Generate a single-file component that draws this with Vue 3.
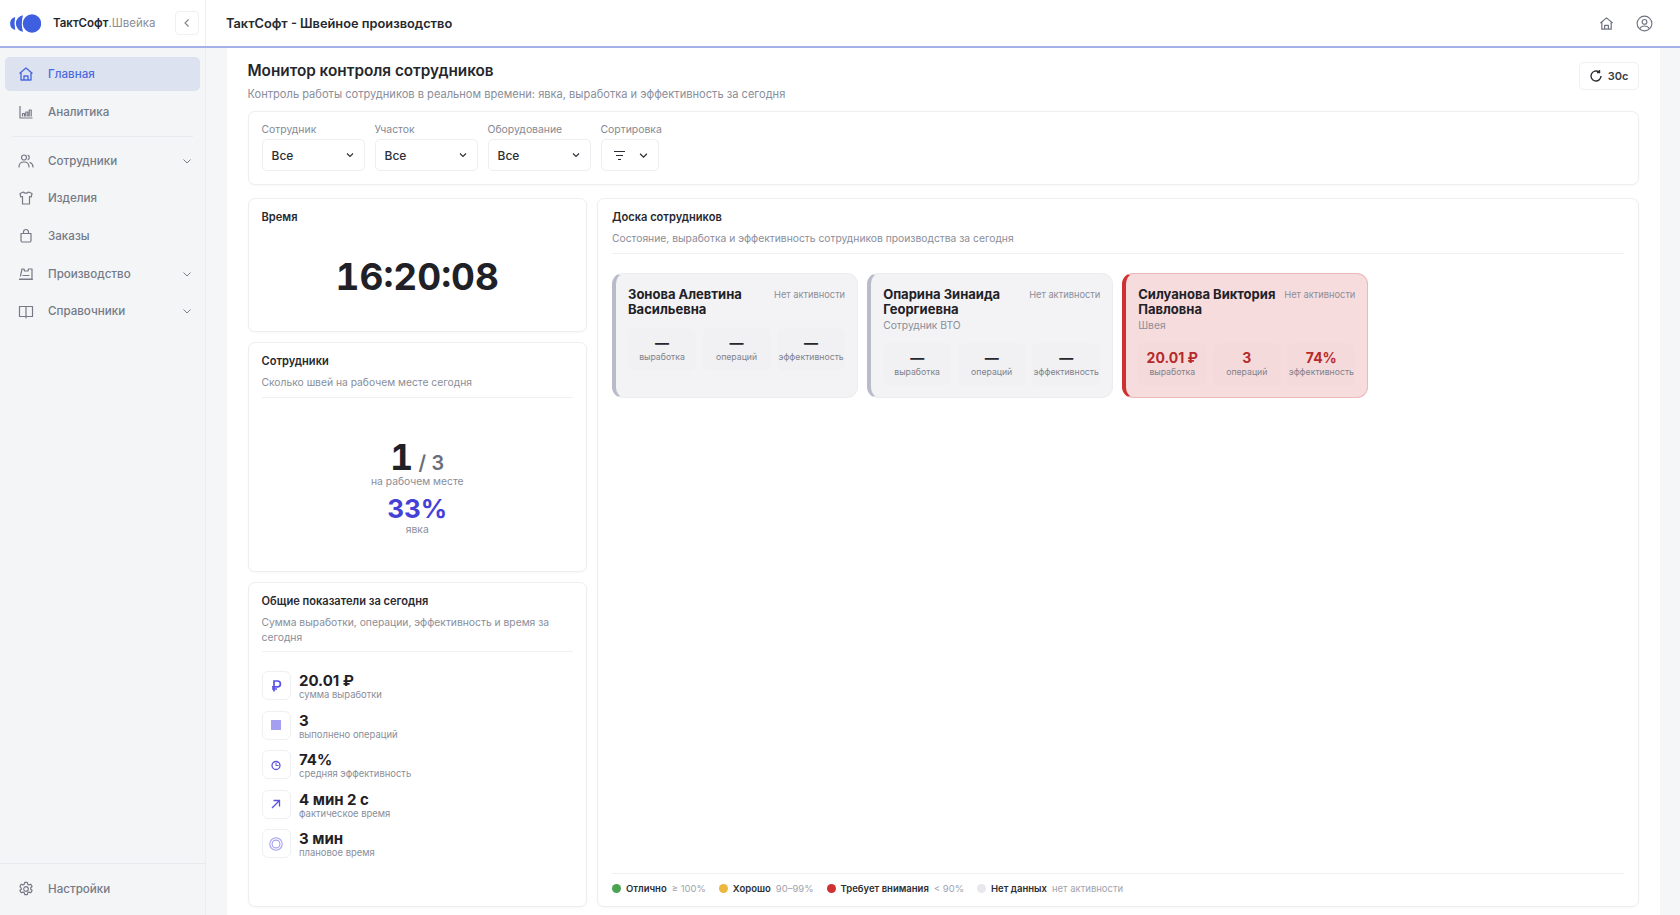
<script setup>
const navTop = [
  { label: "Главная", icon: "home", active: true },
  { label: "Аналитика", icon: "chart" },
];
const navRest = [
  { label: "Сотрудники", icon: "users", arrow: true },
  { label: "Изделия", icon: "shirt" },
  { label: "Заказы", icon: "bag" },
  { label: "Производство", icon: "factory", arrow: true },
  { label: "Справочники", icon: "book", arrow: true },
];
const filters = [
  { label: "Сотрудник" },
  { label: "Участок" },
  { label: "Оборудование" },
];
const totals = [
  { icon: "rub", value: "20.01 ₽", label: "сумма выработки" },
  { icon: "square", value: "3", label: "выполнено операций" },
  { icon: "pie", value: "74%", label: "средняя эффективность" },
  { icon: "arrow", value: "4 мин 2 с", label: "фактическое время" },
  { icon: "ring", value: "3 мин", label: "плановое время" },
];
const workers = [
  { name: "Зонова Алевтина Васильевна", role: "", vals: ["—", "—", "—"] },
  { name: "Опарина Зинаида Георгиевна", role: "Сотрудник ВТО", vals: ["—", "—", "—"] },
  { name: "Силуанова Виктория Павловна", role: "Швея", vals: ["20.01 ₽", "3", "74%"], bad: true },
];
const metricLabels = ["выработка", "операций", "эффективность"];
const legend = [
  { color: "#4aa351", name: "Отлично", note: "≥ 100%" },
  { color: "#ebb73c", name: "Хорошо", note: "90–99%" },
  { color: "#cf3030", name: "Требует внимания", note: "< 90%" },
  { color: "#e6e8ee", name: "Нет данных", note: "нет активности" },
];
</script>

<template>
  <div class="app">
    <header class="topbar">
      <div class="brand">
        <svg class="logo" width="31" height="19" viewBox="0 0 31 19" fill="#3d5fe0">
          <path d="M5.200 3A6.700 6.700 0 0 0 5.200 16 30 30 0 0 1 5.200 3Z" />
          <path d="M13 1.200A8.400 8.400 0 0 0 13 17.800 30 30 0 0 1 13 1.200Z" />
          <circle cx="22" cy="9.500" r="9.200" />
        </svg>
        <span class="brand-name"><b>ТактСофт</b>.Швейка</span>
        <button class="collapse">
          <svg width="12" height="12" viewBox="0 0 12 12" fill="none" stroke="#7b808c" stroke-width="1.100"><path d="M7.500 2.500 4 6l3.500 3.500" /></svg>
        </button>
      </div>
      <div class="top-title">ТактСофт - Швейное производство</div>
      <div class="top-icons">
        <svg width="15" height="15" viewBox="0 0 16 16" fill="none" stroke="#6f7480" stroke-width="1.300" stroke-linejoin="round"><path d="M1.500 7.500 8 2l6.500 5.500M3 6.500V14h10V6.500M6 14v-4h4v4" /></svg>
        <svg width="17" height="17" viewBox="0 0 18 18" fill="none" stroke="#6f7480" stroke-width="1.200"><circle cx="9" cy="9" r="7.800" /><circle cx="9" cy="7.300" r="2.500" /><path d="M3.900 14.600c1-2 3-2.900 5.100-2.900s4.100.9 5.100 2.900" /></svg>
      </div>
    </header>

    <div class="body">
      <aside class="sidebar">
        <nav class="nav">
          <a v-for="item in navTop" :key="item.label" class="nav-item" :class="{ active: item.active }">
            <svg class="nav-icon" width="16" height="16" viewBox="0 0 16 16" fill="none" stroke="currentColor" stroke-width="1.200" stroke-linejoin="round">
              <template v-if="item.icon === 'home'"><path d="M1.500 7.500 8 2l6.500 5.500M3 6.500V14h10V6.500M6 14v-4h4v4" stroke-width="1.400" /></template>
              <template v-else><path d="M2 2v12h12.500M4.500 12.500V9.500h2v3M7.800 12.500V8h2v4.500M11.200 12.500V6h2v6.500" /></template>
            </svg>
            <span>{{ item.label }}</span>
          </a>
          <div class="nav-line"></div>
          <a v-for="item in navRest" :key="item.label" class="nav-item">
            <svg class="nav-icon" width="16" height="16" viewBox="0 0 16 16" fill="none" stroke="currentColor" stroke-width="1.200" stroke-linejoin="round" stroke-linecap="round">
              <template v-if="item.icon === 'users'"><circle cx="6" cy="4.500" r="2.500" /><path d="M1 14c0-3 2-5 5-5s5 2 5 5M10 2.300a2.500 2.500 0 0 1 0 4.400M12 9.500c1.800.7 3 2.300 3 4.500" /></template>
              <template v-if="item.icon === 'shirt'"><path d="M5.500 2 2 3.500l.8 3.500 1.700-.5V14h7V6.500l1.700.5.800-3.500L10.500 2c-.5 1.500-4.500 1.500-5 0Z" /></template>
              <template v-if="item.icon === 'bag'"><path d="M3 5.500h10V12.500a1.500 1.500 0 0 1-1.500 1.500h-7A1.500 1.500 0 0 1 3 12.500ZM5.500 5.500V4a2.500 2.500 0 0 1 5 0v1.500" /></template>
              <template v-if="item.icon === 'factory'"><path d="M2.500 10 4 3h2l.500 2H10l.500-2h3.500v10H1.500M1.500 13.500h13M5 9.500h6" /></template>
              <template v-if="item.icon === 'book'"><path d="M8 3.500H1.500v10H8h6.500v-10ZM8 3.500V15" /></template>
            </svg>
            <span>{{ item.label }}</span>
            <svg v-if="item.arrow" class="nav-arrow" width="10" height="10" viewBox="0 0 10 10" fill="none" stroke="#7b808c" stroke-width="1"><path d="M1.500 3.500 5 7l3.500-3.500" /></svg>
          </a>
        </nav>
        <div class="side-foot">
          <a class="nav-item">
            <svg class="nav-icon" width="16" height="16" viewBox="0 0 16 16" fill="none" stroke="currentColor" stroke-width="1.200" stroke-linejoin="round"><circle cx="8" cy="8" r="2.300" /><path d="M6.700 1.300h2.600l.4 1.900 1.300.7 1.800-.7 1.300 2.300-1.400 1.300v1.400l1.400 1.300-1.300 2.300-1.800-.7-1.300.7-.4 1.900H6.700l-.4-1.900-1.300-.7-1.800.7-1.300-2.300 1.400-1.300V7.300L1.900 5.500l1.300-2.300 1.800.7 1.300-.7Z" /></svg>
            <span>Настройки</span>
          </a>
        </div>
      </aside>

      <main class="main">
        <div class="panel">
          <div class="page-head">
            <div>
              <h1>Монитор контроля сотрудников</h1>
              <p class="muted page-sub">Контроль работы сотрудников в реальном времени: явка, выработка и эффективность за сегодня</p>
            </div>
            <button class="refresh">
              <svg width="14" height="14" viewBox="0 0 14 14" fill="none" stroke="#2a2d33" stroke-width="1.400"><path d="M12 7a5 5 0 1 1-2-4M10.500 1v2.500H8" /></svg>
              <span>30с</span>
            </button>
          </div>

          <section class="card filters">
            <label v-for="f in filters" :key="f.label" class="filter">
              <span class="filter-label">{{ f.label }}</span>
              <span class="select">
                <span>Все</span>
                <svg width="8" height="8" viewBox="0 0 8 8" fill="none" stroke="#2a2d33" stroke-width="1.100"><path d="M1 2.500 4 5.500l3-3" /></svg>
              </span>
            </label>
            <label class="filter">
              <span class="filter-label">Сортировка</span>
              <span class="select sort">
                <svg width="13" height="11" viewBox="0 0 13 11" fill="none" stroke="#2a2d33" stroke-width="1.200"><path d="M1 1.500h11M3 5.500h7M5 9.500h3" /></svg>
                <svg width="9" height="9" viewBox="0 0 8 8" fill="none" stroke="#2a2d33" stroke-width="1.100"><path d="M1 2.500 4 5.500l3-3" /></svg>
              </span>
            </label>
          </section>

          <div class="grid">
            <div class="col">
              <section class="card time-card">
                <h2>Время</h2>
                <div class="clock">16:20:08</div>
              </section>

              <section class="card staff-card">
                <h2>Сотрудники</h2>
                <p class="muted card-sub">Сколько швей на рабочем месте сегодня</p>
                <div class="rule"></div>
                <div class="staff-body">
                  <div class="staff-count"><b>1</b><span> / 3</span></div>
                  <div class="muted staff-note">на рабочем месте</div>
                  <div class="staff-pct">33%</div>
                  <div class="muted staff-note">явка</div>
                </div>
              </section>

              <section class="card totals-card">
                <h2>Общие показатели за сегодня</h2>
                <p class="muted card-sub">Сумма выработки, операции, эффективность и время за сегодня</p>
                <div class="rule"></div>
                <div class="totals">
                  <div v-for="t in totals" :key="t.label" class="total">
                    <span class="total-icon">
                      <svg width="16" height="16" viewBox="0 0 16 16" fill="none" stroke="#5b52e0" stroke-width="1.300">
                        <template v-if="t.icon === 'rub'"><path d="M6 13.500V3h3.500a2.900 2.900 0 0 1 0 5.800H4M4 11h5" stroke-width="1.700" /></template>
                        <template v-if="t.icon === 'square'"><rect x="3" y="3" width="10" height="10" fill="#a49fee" stroke="none" /></template>
                        <template v-if="t.icon === 'pie'"><circle cx="8" cy="8.500" r="4" /><path d="M8 6v2.500h2.500" stroke-width="1" /></template>
                        <template v-if="t.icon === 'arrow'"><path d="M4 12 11.500 4.500M5.500 4.500h6v6" /></template>
                        <template v-if="t.icon === 'ring'"><circle cx="8" cy="8" r="6.200" stroke="#a49fee" stroke-width="1.100" /><circle cx="8" cy="8" r="3.900" stroke="#a49fee" stroke-width="1.100" /></template>
                      </svg>
                    </span>
                    <div class="total-text">
                      <div class="total-value">{{ t.value }}</div>
                      <div class="muted total-label">{{ t.label }}</div>
                    </div>
                  </div>
                </div>
              </section>
            </div>

            <section class="card board">
              <h2>Доска сотрудников</h2>
              <p class="muted card-sub">Состояние, выработка и эффективность сотрудников производства за сегодня</p>
              <div class="rule"></div>
              <div class="workers">
                <div v-for="w in workers" :key="w.name" class="worker" :class="{ bad: w.bad }">
                  <div class="worker-head">
                    <div class="worker-name">{{ w.name }}</div>
                    <div class="muted worker-state">Нет активности</div>
                  </div>
                  <div v-if="w.role" class="muted worker-role">{{ w.role }}</div>
                  <div class="metrics">
                    <div v-for="(v, i) in w.vals" :key="i" class="metric">
                      <div class="metric-val">{{ v }}</div>
                      <div class="metric-label">{{ metricLabels[i] }}</div>
                    </div>
                  </div>
                </div>
              </div>
              <div class="legend">
                <div v-for="l in legend" :key="l.name" class="legend-item">
                  <i :style="{ background: l.color }"></i>
                  <b>{{ l.name }}</b>
                  <span>{{ l.note }}</span>
                </div>
              </div>
            </section>
          </div>
        </div>
      </main>
    </div>
  </div>
</template>

<style scoped>
.app {
  height: 915px;
  overflow: hidden;
  display: flex;
  flex-direction: column;
  font-family: Inter, "Noto Sans", sans-serif;
  color: #1f2127;
  background: #f5f6f8;
}
.topbar {
  height: 48px;
  flex: none;
  box-sizing: border-box;
  display: flex;
  align-items: center;
  background: #fff;
  border-bottom: 2px solid #a3b1ea;
}
.brand {
  width: 206px;
  height: 46px;
  flex: none;
  box-sizing: border-box;
  display: flex;
  align-items: center;
  padding: 0 6px 0 10px;
  border-right: 1px solid #eceef1;
}
.logo {
  flex: none;
}
.brand-name {
  margin-left: 12px;
  font-size: 11.500px;
  color: #8a8e99;
  white-space: nowrap;
}
.brand-name b {
  color: #24262c;
  font-weight: 600;
}
.collapse {
  margin-left: auto;
  width: 24px;
  height: 24px;
  padding: 0;
  display: flex;
  align-items: center;
  justify-content: center;
  background: #fff;
  border: 1px solid #eef0f3;
  border-radius: 4px;
}
.top-title {
  margin-left: 20px;
  padding-top: 1px;
  font-size: 12.800px;
  font-weight: 600;
  color: #26282e;
}
.top-icons {
  margin-left: auto;
  display: flex;
  align-items: center;
  gap: 22px;
  padding-right: 27px;
}
.body {
  flex: 1;
  min-height: 0;
  display: flex;
}
.sidebar {
  width: 206px;
  flex: none;
  box-sizing: border-box;
  display: flex;
  flex-direction: column;
  background: #f4f5f7;
  border-right: 1px solid #eceef1;
}
.nav {
  flex: 1;
  padding: 9px 5px 0;
  display: flex;
  flex-direction: column;
  gap: 3.700px;
}
.nav-item {
  height: 34px;
  flex: none;
  display: flex;
  align-items: center;
  padding: 0 8px 0 13px;
  border-radius: 5px;
  font-size: 11.600px;
  font-weight: 500;
  color: #757a86;
}
.nav-item.active {
  background: #dde2f1;
  color: #4a6bdf;
}
.nav-icon {
  flex: none;
  margin-right: 14px;
}
.nav-arrow {
  margin-left: auto;
}
.nav-line {
  height: 1px;
  margin: 4px 7px 2.500px;
  background: #e8eaee;
}
.side-foot {
  height: 52px;
  flex: none;
  box-sizing: border-box;
  padding: 8px 5px 0;
  border-top: 1px solid #e8eaee;
}
.main {
  flex: 1;
  min-width: 0;
  padding: 0 20.500px 0 20.500px;
}
.panel {
  height: 100%;
  box-sizing: border-box;
  background: #fff;
  padding: 13px 21px 8px 21px;
  display: flex;
  flex-direction: column;
}
.page-head {
  display: flex;
  justify-content: space-between;
  align-items: flex-start;
  height: 50px;
}
h1 {
  margin: 0;
  font-size: 15.300px;
  line-height: 19px;
  font-weight: 600;
  color: #24262c;
}
.muted {
  color: #8a8e9a;
}
.page-sub {
  margin: 6px 0 0;
  font-size: 11.100px;
  line-height: 16px;
}
.refresh {
  margin-top: 1px;
  width: 60px;
  height: 28px;
  padding: 0;
  display: flex;
  align-items: center;
  justify-content: center;
  gap: 5px;
  background: #fff;
  border: 1px solid #eef0f3;
  border-radius: 5px;
  font-family: inherit;
  font-size: 11px;
  font-weight: 600;
  color: #3a3d45;
}
.card {
  box-sizing: border-box;
  background: #fff;
  border: 1px solid #eceef1;
  border-radius: 7px;
  box-shadow: 0 1px 2px rgba(30, 35, 60, 0.03);
}
.filters {
  height: 74px;
  flex: none;
  display: flex;
  gap: 10px;
  padding: 11px 13px 0;
}
.filter {
  display: flex;
  flex-direction: column;
  gap: 2px;
}
.filter-label {
  font-size: 10.400px;
  line-height: 14px;
  color: #858995;
}
.select {
  width: 103px;
  height: 32px;
  box-sizing: border-box;
  padding: 0 10px 0 9px;
  display: flex;
  align-items: center;
  justify-content: space-between;
  border: 1px solid #eceef1;
  border-radius: 5px;
  font-size: 12px;
  font-weight: 500;
  color: #2c2f36;
}
.select.sort {
  width: 58px;
  padding: 0 10px 0 11px;
}
.grid {
  flex: 1;
  min-height: 0;
  margin-top: 13px;
  display: grid;
  grid-template-columns: 339.500px 1fr;
  gap: 10px;
}
.col {
  display: flex;
  flex-direction: column;
  gap: 10px;
  min-height: 0;
}
h2 {
  margin: 0;
  font-size: 11.100px;
  line-height: 14px;
  font-weight: 600;
  color: #27292f;
}
.time-card {
  height: 134px;
  flex: none;
  padding: 11px 13px 0;
}
.clock {
  margin-top: 31px;
  text-align: center;
  font-size: 37px;
  line-height: 44px;
  font-weight: 700;
  font-variant-numeric: tabular-nums;
  color: #1f2127;
}
.staff-card {
  height: 230px;
  flex: none;
  padding: 11px 13px 0;
}
.card-sub {
  margin: 7px 0 0;
  font-size: 10.300px;
  line-height: 14.500px;
}
.rule {
  height: 1px;
  margin-top: 7px;
  background: #eff0f3;
}
.staff-body {
  margin-top: 41px;
  text-align: center;
}
.staff-count {
  line-height: 36px;
  height: 36px;
  font-variant-numeric: tabular-nums;
}
.staff-count b {
  font-size: 36px;
  font-weight: 700;
  color: #1f2127;
}
.staff-count span {
  font-size: 20px;
  font-weight: 600;
  color: #6a6e7a;
}
.staff-note {
  font-size: 10.300px;
  line-height: 13px;
}
.staff-pct {
  margin-top: 6px;
  font-size: 26px;
  line-height: 29px;
  font-weight: 700;
  color: #4541d6;
}
.totals-card {
  flex: 1;
  min-height: 0;
  padding: 11px 13px 0;
}
.totals {
  margin-top: 19px;
  display: flex;
  flex-direction: column;
  gap: 10.500px;
}
.total {
  display: flex;
  align-items: flex-start;
  gap: 8.500px;
}
.total-icon {
  width: 29px;
  height: 29px;
  flex: none;
  display: flex;
  align-items: center;
  justify-content: center;
  border: 1px solid #eef0f3;
  border-radius: 6px;
  box-sizing: border-box;
}
.total-text {
  padding-top: 2px;
  height: 29px;
  box-sizing: border-box;
}
.total-value {
  font-size: 15px;
  line-height: 15px;
  font-weight: 700;
  color: #1f2127;
}
.total-label {
  font-size: 9.450px;
  line-height: 13px;
}
.board {
  padding: 11px 14px 0;
  display: flex;
  flex-direction: column;
  min-height: 0;
}
.workers {
  flex: 1;
  margin-top: 19px;
  display: grid;
  grid-template-columns: repeat(4, 1fr);
  grid-auto-rows: 125px;
  gap: 9px;
}
.worker {
  box-sizing: border-box;
  padding: 13px 12px 0 12px;
  background: #f3f3f5;
  border: 1px solid #ededf0;
  border-left: 4px solid #b7bcc8;
  border-radius: 11px;
}
.worker.bad {
  background: #f6dcdd;
  border-color: #ecb9bb;
  border-left-color: #cf3030;
}
.worker-head {
  display: flex;
  justify-content: space-between;
  align-items: flex-start;
  gap: 4px;
}
.worker-name {
  flex: 1;
  font-size: 13px;
  line-height: 15.500px;
  font-weight: 700;
  color: #1f2127;
}
.worker-state {
  font-size: 9.300px;
  line-height: 15px;
  white-space: nowrap;
}
.worker-role {
  font-size: 10.300px;
  line-height: 15px;
}
.metrics {
  margin-top: 10px;
  display: grid;
  grid-template-columns: repeat(3, 1fr);
  gap: 6.500px;
}
.metric {
  height: 43px;
  padding-top: 7px;
  box-sizing: border-box;
  text-align: center;
  background: #f1f1f3;
  border-radius: 7px;
}
.bad .metric {
  background: #f5dadb;
}
.metric-val {
  font-size: 14px;
  line-height: 16px;
  font-weight: 700;
  color: #26282e;
}
.bad .metric-val {
  color: #b52a2a;
}
.metric-label {
  font-size: 8.700px;
  line-height: 12px;
  color: #7e828e;
  white-space: nowrap;
}
.legend {
  height: 33px;
  flex: none;
  box-sizing: border-box;
  padding-bottom: 4px;
  display: flex;
  align-items: center;
  gap: 13px;
  border-top: 1px solid #eff0f3;
  font-size: 9.500px;
}
.legend-item {
  display: flex;
  align-items: center;
  gap: 5px;
}
.legend-item i {
  width: 9px;
  height: 9px;
  border-radius: 50%;
}
.legend-item b {
  font-weight: 600;
  color: #2c2f36;
}
.legend-item span {
  color: #a0a4ae;
}
</style>
